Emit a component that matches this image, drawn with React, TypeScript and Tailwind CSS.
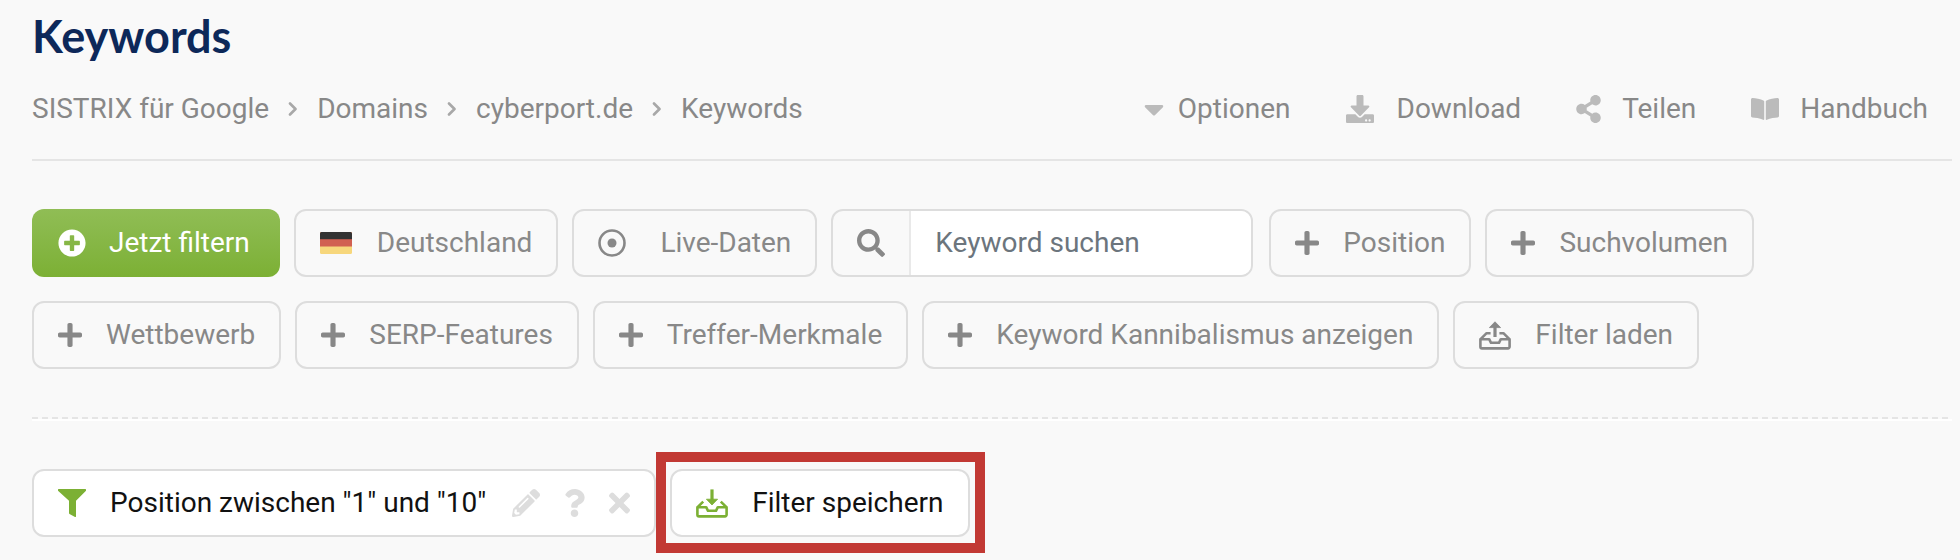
import type { ReactNode } from 'react'
import {
  FaBookOpen,
  FaCaretDown,
  FaDownload,
  FaPencilAlt,
  FaPlus,
  FaPlusCircle,
  FaQuestion,
  FaSearch,
  FaShareAlt,
  FaTimes,
} from 'react-icons/fa'

const breadcrumbs = ['SISTRIX für Google', 'Domains', 'cyberport.de', 'Keywords']

const actions = [
  { label: 'Optionen', icon: <FaCaretDown className="h-8 w-5" />, gap: 'gap-[14px]' },
  { label: 'Download', icon: <FaDownload className="size-7" />, gap: 'gap-[23px]' },
  { label: 'Teilen', icon: <FaShareAlt className="h-7 w-[25px]" />, gap: 'gap-[21px]' },
  { label: 'Handbuch', icon: <FaBookOpen className="size-7" />, gap: 'gap-[21px]' },
]

function ChevronIcon() {
  return (
    <svg width="10" height="14" viewBox="0 0 10 14" fill="none" stroke="#a8a8a8" strokeWidth="2.6" strokeLinecap="round" strokeLinejoin="round" aria-hidden="true">
      <path d="M2 1.5 7.5 7 2 12.5" />
    </svg>
  )
}

function FlagIcon() {
  return (
    <svg width="33" height="22" viewBox="0 0 33 22" aria-hidden="true">
      <clipPath id="flag">
        <rect width="32" height="22" rx="1.5" />
      </clipPath>
      <g clipPath="url(#flag)">
        <rect width="32" height="22" fill="#f7d77c" />
        <rect width="32" height="14.5" fill="#d16052" />
        <rect width="32" height="7.2" fill="#333" />
      </g>
    </svg>
  )
}

function LiveIcon() {
  return (
    <svg width="38" height="28" viewBox="0 0 38 28" aria-hidden="true">
      <circle cx="14" cy="14" r="12.5" fill="none" stroke="currentColor" strokeWidth="2.6" />
      <circle cx="14" cy="14" r="4.5" fill="currentColor" />
    </svg>
  )
}

function TrayIcon({ direction }: { direction: 'up' | 'down' }) {
  return (
    <svg width="32" height="29" viewBox="0 0 32 29" fill="none" stroke="currentColor" strokeWidth="2.6" strokeLinejoin="round" aria-hidden="true">
      <path d="M1.4 18.2h8.8l1.8 3.6h8l1.8-3.6h8.8v7.6a1.6 1.6 0 0 1-1.6 1.6H3a1.6 1.6 0 0 1-1.6-1.6z" />
      {direction === 'up' ? (
        <>
          <path d="m1.6 18.2 6-6h4M30.4 18.2l-6-6h-4" />
          <path d="M16 16V6" strokeWidth="3.2" />
          <path d="M16 .8 21.6 6.6H10.4z" fill="currentColor" strokeWidth=".8" />
        </>
      ) : (
        <>
          <path d="m1.6 18.2 5.6-5.6M30.4 18.2l-5.6-5.6" />
          <path d="M16 .4V11" strokeWidth="3.2" />
          <path d="M16 16 21.6 10.2H10.4z" fill="currentColor" strokeWidth=".8" />
        </>
      )}
    </svg>
  )
}

function FunnelIcon() {
  return (
    <svg width="28" height="28" viewBox="0 0 28 28" fill="#7cb034" aria-hidden="true">
      <path d="M.6 0h26.8a.6.6 0 0 1 .6.6v1.2L18 11.8V27.4a.6.6 0 0 1-1 .5l-5.5-3a1 1 0 0 1-.5-.9V11.8L0 1.8V.6A.6.6 0 0 1 .6 0z" />
    </svg>
  )
}

interface FilterButtonProps {
  icon: ReactNode
  label: string
  active?: boolean
}

function FilterButton({ icon, label, active }: FilterButtonProps) {
  return (
    <button
      type="button"
      className={
        active
          ? 'flex h-17 items-center gap-6 rounded-xl border-2 border-[#ddd] bg-white px-6 text-[#111]'
          : 'flex h-17 items-center gap-6 rounded-xl border-2 border-[#ddd] px-6 text-[#888]'
      }
    >
      {icon}
      {label}
    </button>
  )
}

function PlusIcon() {
  return <FaPlus className="h-7 w-6" />
}

export default function App() {
  return (
    <div className="min-h-screen bg-[#f9f9f9] pb-1 pl-8 pr-2 font-['Roboto',sans-serif] text-[28px] leading-9 text-[#888]">
      <header className="border-b-2 border-[#e5e5e5] pb-8 pt-2">
        <h1 className="font-['Lato',sans-serif] text-[45px] font-bold leading-14 text-[#0d2859]">Keywords</h1>
        <div className="flex flex-wrap items-center justify-between pt-[27px]">
          <nav aria-label="Breadcrumb">
            <ol className="flex items-center">
              {breadcrumbs.map((crumb, i) => (
                <li key={crumb} className="flex items-center">
                  {i > 0 && (
                    <span className="px-[19px]">
                      <ChevronIcon />
                    </span>
                  )}
                  <a href="#">{crumb}</a>
                </li>
              ))}
            </ol>
          </nav>
          <div className="flex items-center gap-[55px] pr-6">
            {actions.map(({ label, icon, gap }) => (
              <button key={label} type="button" className={`flex items-center ${gap}`}>
                <span className="text-[#bbb]">{icon}</span>
                {label}
              </button>
            ))}
          </div>
        </div>
      </header>

      {/* Filterleiste */}
      <section className="py-12">
        <div className="flex flex-wrap gap-x-[14px] gap-y-6">
          <button
            type="button"
            className="flex h-17 items-center gap-[23px] rounded-xl bg-linear-to-b from-[#90bd55] to-[#7cb034] pl-[26px] pr-[30px] text-white"
          >
            <FaPlusCircle className="size-7" />
            Jetzt filtern
          </button>
          <FilterButton icon={<FlagIcon />} label="Deutschland" />
          <FilterButton icon={<LiveIcon />} label="Live-Daten" />
          <label className="mr-0.5 flex h-17 w-[422px] overflow-hidden rounded-xl border-2 border-[#ddd]">
            <span className="flex w-[78px] shrink-0 items-center justify-center border-r-2 border-[#e9e9e9]">
              <FaSearch className="size-7" />
            </span>
            <input
              type="text"
              aria-label="Keyword suchen"
              placeholder="Keyword suchen"
              className="min-w-0 flex-1 bg-white px-6 outline-none placeholder:text-[#6c757d]"
            />
          </label>
          <FilterButton icon={<PlusIcon />} label="Position" />
          <FilterButton icon={<PlusIcon />} label="Suchvolumen" />
        </div>
        <div className="flex flex-wrap gap-x-[14px] gap-y-6 pt-6">
          <FilterButton icon={<PlusIcon />} label="Wettbewerb" />
          <FilterButton icon={<PlusIcon />} label="SERP-Features" />
          <FilterButton icon={<PlusIcon />} label="Treffer-Merkmale" />
          <FilterButton icon={<PlusIcon />} label="Keyword Kannibalismus anzeigen" />
          <FilterButton icon={<TrayIcon direction="up" />} label="Filter laden" />
        </div>
      </section>

      <div className="h-0.5 bg-[repeating-linear-gradient(90deg,#e5e5e5_0_6px,transparent_6px_10px)]" />
      <div className="h-0.5 bg-white" />

      {/* Aktive Filter */}
      <section className="flex flex-wrap items-center pt-[31px]">
        <div className="flex h-17 items-center rounded-xl border-2 border-[#ddd] bg-white px-6 text-[#111]">
          <FunnelIcon />
          <span className="pl-6 pr-[26px]">Position zwischen "1" und "10"</span>
          <div className="flex items-center gap-6 text-[#ddd]">
            <button type="button" aria-label="Bearbeiten">
              <FaPencilAlt className="size-7" />
            </button>
            <button type="button" aria-label="Hilfe">
              <FaQuestion className="h-7 w-[21px]" />
            </button>
            <button type="button" aria-label="Entfernen">
              <FaTimes className="h-8 w-[21px]" />
            </button>
          </div>
        </div>
        <div className="border-[10px] border-[#c23934] pb-1.5 pl-1 pr-[5px] pt-[7px]">
          <FilterButton active icon={<span className="text-[#7cb034]"><TrayIcon direction="down" /></span>} label="Filter speichern" />
        </div>
      </section>
    </div>
  )
}
